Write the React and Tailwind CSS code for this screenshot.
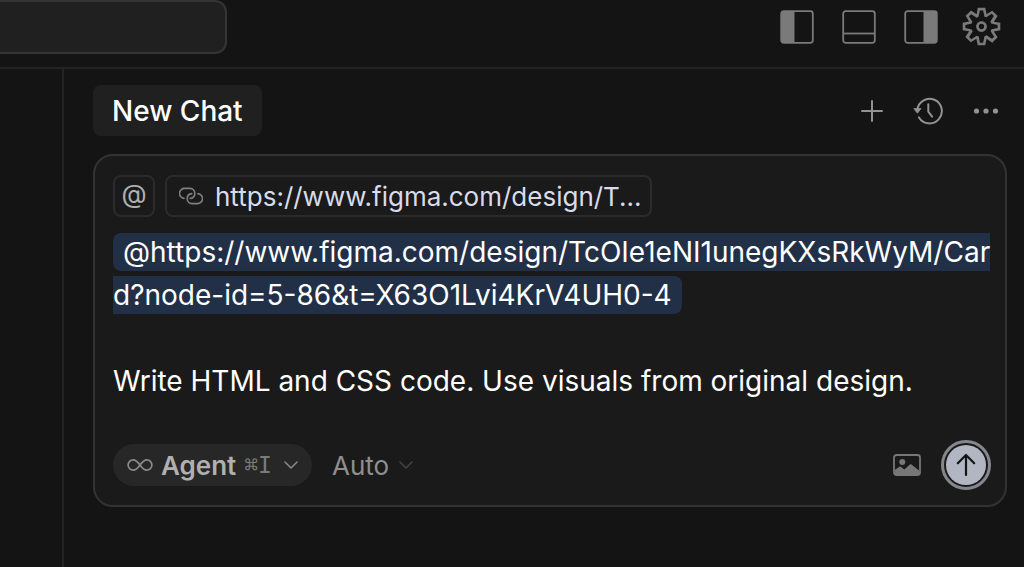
import React, { useState } from "react";

const LayoutIcon = ({ variant }) => (
  <svg width="34" height="34" viewBox="0 0 34 34" fill="none" aria-hidden="true">
    <rect x="1.2" y="1.2" width="31.6" height="31.6" rx="2.5" stroke="currentColor" strokeWidth="1.8" />
    {variant === "left" && <path d="M2 2h12.5v30H2z" fill="currentColor" />}
    {variant === "bottom" && <path d="M2 23.5h30" stroke="currentColor" strokeWidth="1.8" />}
    {variant === "right" && <path d="M19.5 2H32v30H19.5z" fill="currentColor" />}
  </svg>
);

const GearIcon = () => (
  <svg width="43" height="43" viewBox="0 0 16 16" fill="currentColor" aria-hidden="true">
    <path
      fillRule="evenodd"
      clipRule="evenodd"
      d="M9.1 4.4L8.6 2H7.4l-.5 2.4-.7.3-2-1.3-.9.8 1.3 2-.2.7-2.4.5v1.2l2.4.5.3.8-1.3 2 .8.8 2-1.3.8.3.4 2.3h1.2l.5-2.4.8-.3 2 1.3.8-.8-1.3-2 .3-.8 2.3-.4V7.4l-2.4-.5-.3-.8 1.3-2-.8-.8-2 1.3-.7-.2zM9.4 1l.5 2.4L12 2.1l2 2-1.4 2.1 2.4.4v2.8l-2.4.5L14 12l-2 2-2.1-1.4-.5 2.4H6.6l-.5-2.4L4 13.9l-2-2 1.4-2.1L1 9.4V6.6l2.4-.5L2.1 4l2-2 2.1 1.4.4-2.4h2.8zm.6 7c0 1.1-.9 2-2 2s-2-.9-2-2 .9-2 2-2 2 .9 2 2zM8 9c.6 0 1-.4 1-1s-.4-1-1-1-1 .4-1 1 .4 1 1 1z"
    />
  </svg>
);

const PlusIcon = () => (
  <svg width="22" height="22" viewBox="0 0 22 22" fill="none" stroke="currentColor" strokeWidth="2" aria-hidden="true">
    <path d="M11 1v20M1 11h20" strokeLinecap="round" />
  </svg>
);

const HistoryIcon = () => (
  <svg width="30" height="30" viewBox="0 0 30 30" fill="none" stroke="currentColor" strokeWidth="2" aria-hidden="true">
    <path d="M4.3 14A12.3 12.3 0 1 1 6 21.4" strokeLinecap="round" />
    <path d="M.8 12.6h7.2l-3.6 4.6z" fill="currentColor" strokeWidth="0.8" strokeLinejoin="round" />
    <path d="M15.3 8.2v7.4l3.8 5" strokeLinecap="round" strokeLinejoin="round" />
  </svg>
);

const EllipsisIcon = () => (
  <svg width="26" height="6" viewBox="0 0 26 6" fill="currentColor" aria-hidden="true">
    <circle cx="3.5" cy="3" r="2.6" />
    <circle cx="13" cy="3" r="2.6" />
    <circle cx="22.5" cy="3" r="2.6" />
  </svg>
);

const LinkIcon = () => (
  <svg width="24" height="18" viewBox="0 0 24 18" fill="none" stroke="currentColor" strokeWidth="1.6" strokeLinecap="round" aria-hidden="true">
    <path d="M5 11.4A5 5 0 0 1 6 1.400h5a4.800 4.800 0 0 1 4.800 4.800c0 2.800-2 4.900-4.600 5.200" />
    <path d="M19 6.600a5 5 0 0 1-1 10h-5a4.800 4.800 0 0 1-4.800-4.800c0-2.800 2-4.900 4.600-5.200" />
  </svg>
);

const InfinityIcon = () => (
  <svg width="26" height="14" viewBox="0 0 26 14" fill="none" stroke="currentColor" strokeWidth="1.7" aria-hidden="true">
    <path d="M13 7C10.5 3.6 9 1.8 6.3 1.8a5.2 5.2 0 0 0 0 10.4C9 12.2 10.5 10.4 13 7s4-5.2 6.7-5.2a5.2 5.2 0 0 1 0 10.4C17 12.2 15.500 10.4 13 7z" />
  </svg>
);

const ChevronIcon = () => (
  <svg width="14" height="8" viewBox="0 0 14 8" fill="none" stroke="currentColor" strokeWidth="1.5" aria-hidden="true">
    <path d="M1 1l6 6 6-6" strokeLinecap="round" strokeLinejoin="round" />
  </svg>
);

const ImageIcon = () => (
  <svg width="28" height="22" viewBox="0 0 28 22" fill="none" aria-hidden="true">
    <rect x="1" y="1" width="26" height="20" rx="2.500" stroke="currentColor" strokeWidth="1.8" />
    <circle cx="9.300" cy="8" r="3" fill="currentColor" />
    <path d="M2 15.800l4.200-2.900c.6-.4 1.200-.4 1.800 0l3.400 2.500 5.200-4.700c.7-.6 1.500-.6 2.200 0L26 16.500V20H2z" fill="currentColor" />
  </svg>
);

const SendIcon = () => (
  <svg width="20" height="24" viewBox="0 0 20 24" fill="none" stroke="currentColor" strokeWidth="2.2" aria-hidden="true">
    <path d="M10 22V2M1.800 10.200L10 2l8.200 8.200" strokeLinecap="round" strokeLinejoin="round" />
  </svg>
);

const layoutButtons = [
  { variant: "left", label: "Toggle primary side bar" },
  { variant: "bottom", label: "Toggle panel" },
  { variant: "right", label: "Toggle secondary side bar" },
];

const TitleBar = () => (
  <header className="flex items-start justify-between border-b-2 border-[#232323] pr-[21px] pb-[13px]">
    <input
      type="text"
      aria-label="Search"
      className="h-[54px] w-[227px] rounded-r-xl border-2 border-l-0 border-[#343434] bg-[#202020] px-4 text-white outline-none"
    />
    <div className="flex items-center gap-[22px] pt-[5px] text-[#7a7a7a]">
      <div className="flex items-center gap-7">
        {layoutButtons.map((b) => (
          <button key={b.variant} aria-label={b.label}>
            <LayoutIcon variant={b.variant} />
          </button>
        ))}
      </div>
      <button aria-label="Settings">
        <GearIcon />
      </button>
    </div>
  </header>
);

const ChatHeader = () => (
  <div className="flex items-center justify-between pr-2">
    <button className="h-[51px] rounded-lg bg-[#202020] px-[19px] text-[28px] font-medium text-white">
      New Chat
    </button>
    <div className="flex items-center gap-[30px] text-[#929292]">
      <button aria-label="New chat">
        <PlusIcon />
      </button>
      <button aria-label="Chat history">
        <HistoryIcon />
      </button>
      <button aria-label="More actions">
        <EllipsisIcon />
      </button>
    </div>
  </div>
);

const Composer = () => {
  const [prompt, setPrompt] = useState(
    "Write HTML and CSS code. Use visuals from original design."
  );

  return (
    <form
      onSubmit={(e) => e.preventDefault()}
      className="mt-[18px] rounded-[20px] border-2 border-[#333333] bg-[#1a1a1a] pt-[19px] pr-3.5 pb-[15px] pl-[18px]"
    >
      <div className="flex gap-2.5">
        <button
          type="button"
          aria-label="Add context"
          className="h-[42px] w-[42px] rounded-lg border-2 border-[#2b2b2b] pb-1 text-[26px] leading-none text-[#b0b0b0]"
        >
          @
        </button>
        <button
          type="button"
          className="flex h-[42px] items-center gap-3 rounded-lg border-2 border-[#2b2b2b] pr-2 pl-3 text-[26px] text-[#d8dcea]"
        >
          <span className="text-[#808080]">
            <LinkIcon />
          </span>
          https://www.figma.com/design/T...
        </button>
      </div>

      <p className="mt-3.5 text-[28px] leading-[43px] break-all text-white">
        <a
          href="#mention"
          className="rounded-lg bg-[#213046] py-0.5 pr-2.5 pl-2.5"
        >
          @https://www.figma.com/design/TcOIe1eNI1unegKXsRkWyM/Card?node-id=5-86&amp;t=X63O1Lvi4KrV4UH0-4
        </a>
      </p>
      <textarea
        aria-label="Message"
        rows={1}
        value={prompt}
        onChange={(e) => setPrompt(e.target.value)}
        className="mt-[43px] block w-full resize-none overflow-hidden bg-transparent text-[28px] leading-[43px] text-white outline-none"
      />

      <div className="mt-[37px] flex items-center justify-between">
        <div className="flex items-center gap-5">
          <div className="flex h-[42px] items-center rounded-full bg-[#272727] px-3.5 text-[#8a8a8a]">
            <InfinityIcon />
            <select
              aria-label="Mode"
              className="field-sizing-content ml-2 appearance-none bg-transparent text-[26px] font-semibold text-[#b0b0b0] outline-none"
            >
              <option>Agent</option>
              <option>Ask</option>
            </select>
            <kbd className="mr-3 ml-2 font-['DejaVu_Sans_Mono',monospace] text-[23px] text-[#7a7a7a]">
              ⌘I
            </kbd>
            <ChevronIcon />
          </div>
          <div className="flex items-center gap-2.5 text-[#444444]">
            <select
              aria-label="Model"
              className="field-sizing-content appearance-none bg-transparent text-[26px] text-[#8f8f8f] outline-none"
            >
              <option>Auto</option>
            </select>
            <ChevronIcon />
          </div>
        </div>
        <div className="flex items-center gap-5">
          <button type="button" aria-label="Attach image" className="text-[#777777]">
            <ImageIcon />
          </button>
          <button
            type="submit"
            aria-label="Send"
            className="flex h-[50px] w-[50px] items-center justify-center rounded-full border-3 border-[#85878f] p-0.5"
          >
            <span className="flex h-full w-full items-center justify-center rounded-full bg-[#b2b6c3] text-[#141414]">
              <SendIcon />
            </span>
          </button>
        </div>
      </div>
    </form>
  );
};

const App = () => {
  return (
    <div className="flex min-h-screen flex-col bg-[#141414] font-['Inter','Liberation_Sans',sans-serif]">
      <TitleBar />
      <div className="flex flex-1">
        <aside className="w-16 shrink-0 border-r-2 border-[#232323]" />
        <main className="min-w-0 flex-1 pt-4 pr-[17px] pb-6 pl-[29px]">
          <ChatHeader />
          <Composer />
        </main>
      </div>
    </div>
  );
};

export default App;
